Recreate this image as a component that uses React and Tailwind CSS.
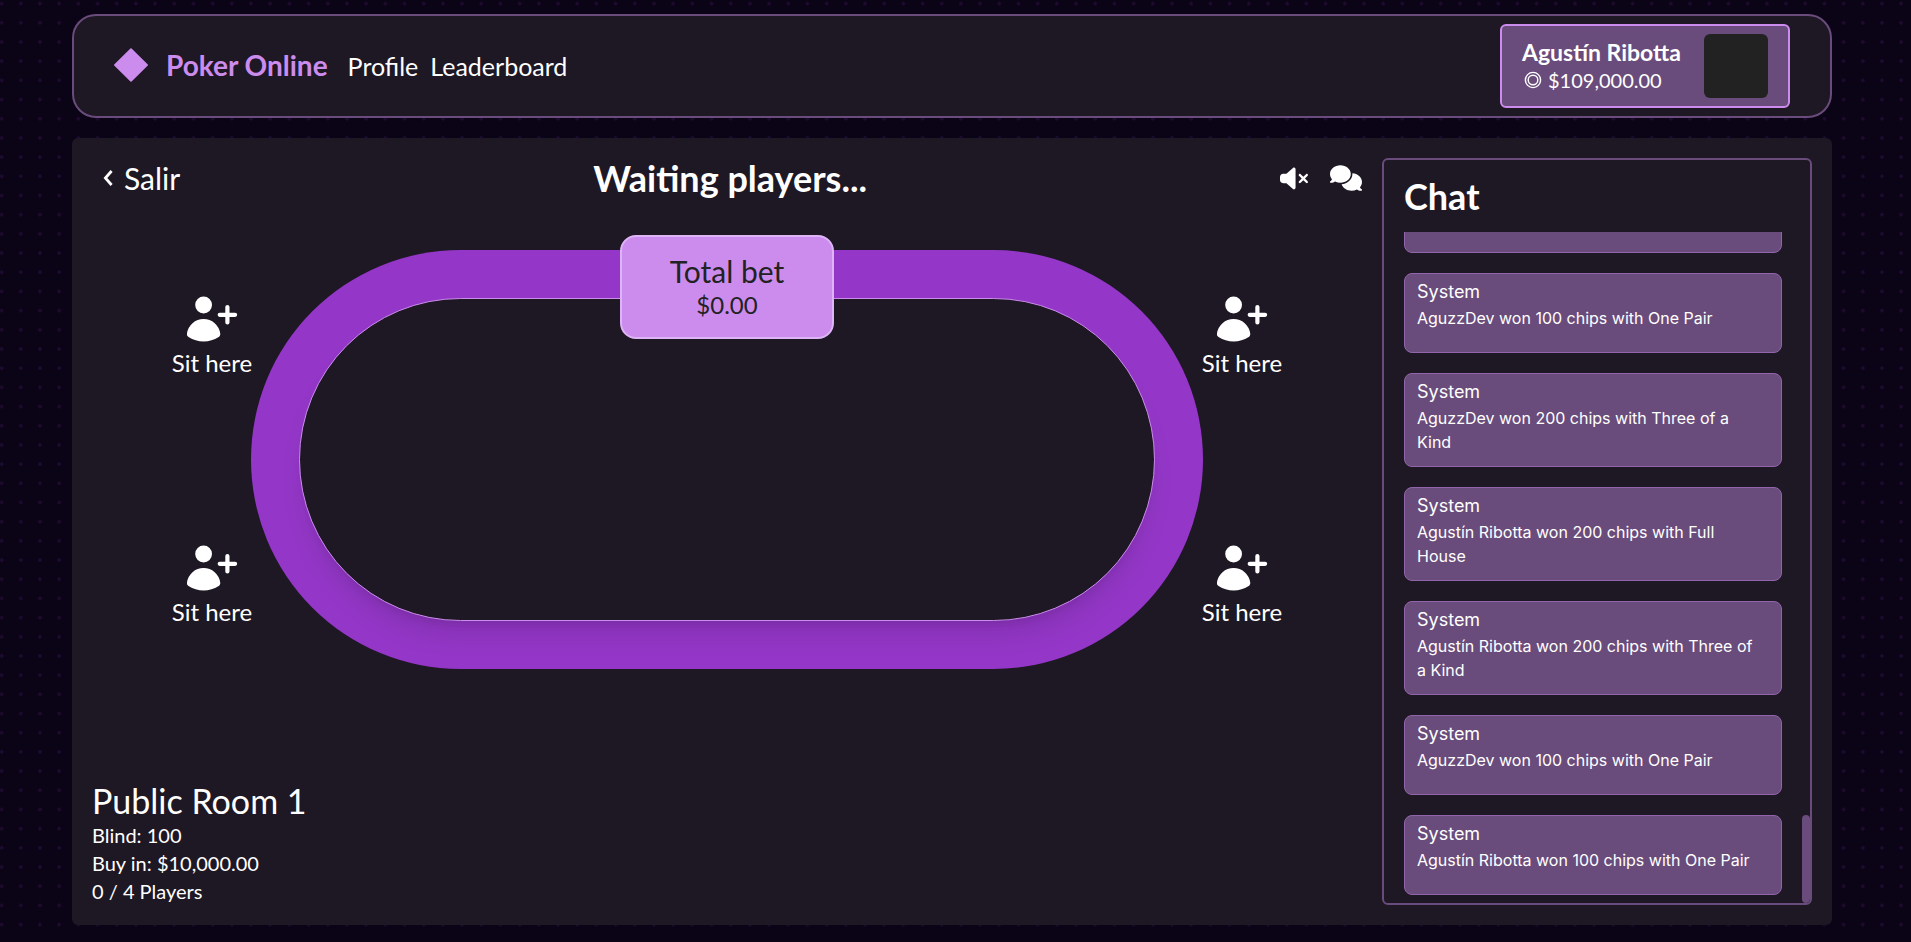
import React from "react";
import { FaComments, FaVolumeXmark } from "react-icons/fa6";

const messages = [
  "AguzzDev won 100 chips with One Pair",
  "AguzzDev won 200 chips with Three of a Kind",
  "Agustín Ribotta won 200 chips with Full House",
  "Agustín Ribotta won 200 chips with Three of a Kind",
  "AguzzDev won 100 chips with One Pair",
  "Agustín Ribotta won 100 chips with One Pair",
];

function DiamondIcon() {
  return (
    <svg viewBox="0 0 34 34" className="h-[34px] w-[34px]" fill="currentColor" aria-hidden="true">
      <path d="M16.4 .6a.8.8 0 0 1 1.2 0L33.8 16.4a.9.9 0 0 1 0 1.2L17.6 33.4a.8.8 0 0 1-1.2 0L.2 17.6a.9.9 0 0 1 0-1.2z" />
    </svg>
  );
}

function ChevronIcon() {
  return (
    <svg viewBox="0 0 12 20" className="h-5 w-3" fill="none" stroke="currentColor" strokeWidth="2.8" aria-hidden="true">
      <path d="M9.6 3 3.4 10l6.2 7" />
    </svg>
  );
}

function ChipIcon() {
  return (
    <svg viewBox="0 0 18 18" className="h-[18px] w-[18px]" fill="none" stroke="currentColor" strokeWidth="1.4" aria-hidden="true">
      <circle cx="9" cy="9" r="7.6" />
      <circle cx="9" cy="9" r="4.8" />
    </svg>
  );
}

function UserPlusIcon() {
  return (
    <svg viewBox="0 0 20 20" className="h-14 w-14" fill="currentColor" aria-hidden="true">
      <path d="M10 5a3 3 0 11-6 0 3 3 0 016 0zM1.615 16.428a1.224 1.224 0 01-.569-1.175 6.002 6.002 0 0111.908 0c.058.467-.172.92-.57 1.174A9.953 9.953 0 017 18a9.953 9.953 0 01-5.385-1.572zM16.25 5.75a.75.75 0 00-1.5 0v2h-2a.75.75 0 000 1.5h2v2a.75.75 0 001.5 0v-2h2a.75.75 0 000-1.5h-2v-2z" />
    </svg>
  );
}

function Seat() {
  return (
    <button type="button" className="flex flex-col items-center">
      <UserPlusIcon />
      <span className="text-2xl leading-8 whitespace-nowrap">Sit here</span>
    </button>
  );
}

function SeatColumn() {
  return (
    <div className="flex w-20 shrink-0 flex-col items-center justify-between py-[41px]">
      <Seat />
      <Seat />
    </div>
  );
}

function Navbar() {
  return (
    <nav className="flex items-center justify-between rounded-3xl border-2 border-[#694c7b] bg-[#1e1724] px-10 py-2">
      <div className="flex items-center">
        <a href="#home" className="flex items-center gap-[18px] pb-0.5 text-[#cc8cee]">
          <DiamondIcon />
          <span className="text-[28px] leading-9 font-bold">Poker Online</span>
        </a>
        <div className="ml-5 flex gap-3 text-[25px] leading-8">
          <a href="#profile">Profile</a>
          <a href="#leaderboard">Leaderboard</a>
        </div>
      </div>
      <div className="flex items-center gap-5 rounded-md border-2 border-[#cc8cee] bg-[#694c7b] px-5 py-2">
        <div className="min-w-[162px]">
          <p className="text-[23px] leading-7 font-bold">Agustín Ribotta</p>
          <p className="flex items-center gap-1.5 pl-0.5 text-xl leading-7">
            <ChipIcon />
            $109,000.00
          </p>
        </div>
        <div className="h-16 w-16 rounded-md bg-[#222222]" />
      </div>
    </nav>
  );
}

function Table() {
  return (
    <div className="relative -mx-px h-[419px] min-w-0 flex-1 rounded-full bg-[#9437c8] p-12">
      <div className="h-full rounded-full border border-[#cc8cee] bg-[#1e1724] shadow-xl" />
      <div className="absolute -top-[15px] left-1/2 flex h-[104px] w-[214px] -translate-x-1/2 flex-col items-center justify-center rounded-2xl border-2 border-[#ddb4f6] bg-[#cc8cee] text-[#222222]">
        <p className="text-3xl leading-9">Total bet</p>
        <p className="text-2xl leading-8">$0.00</p>
      </div>
    </div>
  );
}

function Chat() {
  return (
    <aside className="flex w-[430px] shrink-0 flex-col overflow-hidden rounded-md border-2 border-[#694c7b] pt-4 pl-5">
      <h2 className="text-4xl leading-10 font-bold">Chat</h2>
      <div className="mt-4 flex min-h-0 flex-1 gap-5">
        <ul className="flex min-h-0 flex-1 flex-col justify-end gap-5 overflow-hidden pb-2 font-['Inter',sans-serif]">
          <li className="h-20 shrink-0 rounded-lg border border-[#9165ac] bg-[#694c7b]" />
          {messages.map((text, i) => (
            <li key={i} className="min-h-20 shrink-0 rounded-lg border border-[#9165ac] bg-[#694c7b] pt-1.5 pr-5 pb-3 pl-3">
              <p className="text-lg leading-6">System</p>
              <p className="mt-0.5 text-base leading-6">{text}</p>
            </li>
          ))}
        </ul>
        <div className="h-[88px] w-2 self-end rounded-full bg-[#694c7b]" />
      </div>
    </aside>
  );
}

export default function App() {
  return (
    <div className="h-screen bg-[#0b0316] bg-[radial-gradient(circle_at_center,#1c0b2e_2px,transparent_2px)] bg-[size:1.2rem_1.2rem] bg-position-[-8px_-6px] pt-3.5 pr-[7px] pb-[17px] font-['Lato',sans-serif] text-white">
      <div className="mx-auto flex h-full max-w-[1760px] flex-col gap-5">
        <Navbar />
        <main className="flex min-h-0 flex-1 gap-5 rounded-md bg-[#1e1724] p-5">
          <section className="flex min-w-0 flex-1 flex-col">
            <header className="flex h-10 items-center justify-between">
              <a href="#salir" className="flex items-center gap-2.5 pl-2.5 text-3xl">
                <ChevronIcon />
                Salir
              </a>
              <h1 className="text-4xl leading-10 font-bold">Waiting players...</h1>
              <div className="flex items-center gap-[22px]">
                <button type="button" aria-label="Mute">
                  <FaVolumeXmark className="h-[25px] w-7" />
                </button>
                <button type="button" aria-label="Toggle chat">
                  <FaComments className="h-[26px] w-8" />
                </button>
              </div>
            </header>
            <div className="mt-[52px] flex justify-center px-20">
              <SeatColumn />
              <Table />
              <SeatColumn />
            </div>
            <div className="mt-auto">
              <h2 className="text-[34px] leading-10">Public Room 1</h2>
              <p className="text-xl leading-7">Blind: 100</p>
              <p className="text-xl leading-7">Buy in: $10,000.00</p>
              <p className="text-xl leading-7">0 / 4 Players</p>
            </div>
          </section>
          <Chat />
        </main>
      </div>
    </div>
  );
}
